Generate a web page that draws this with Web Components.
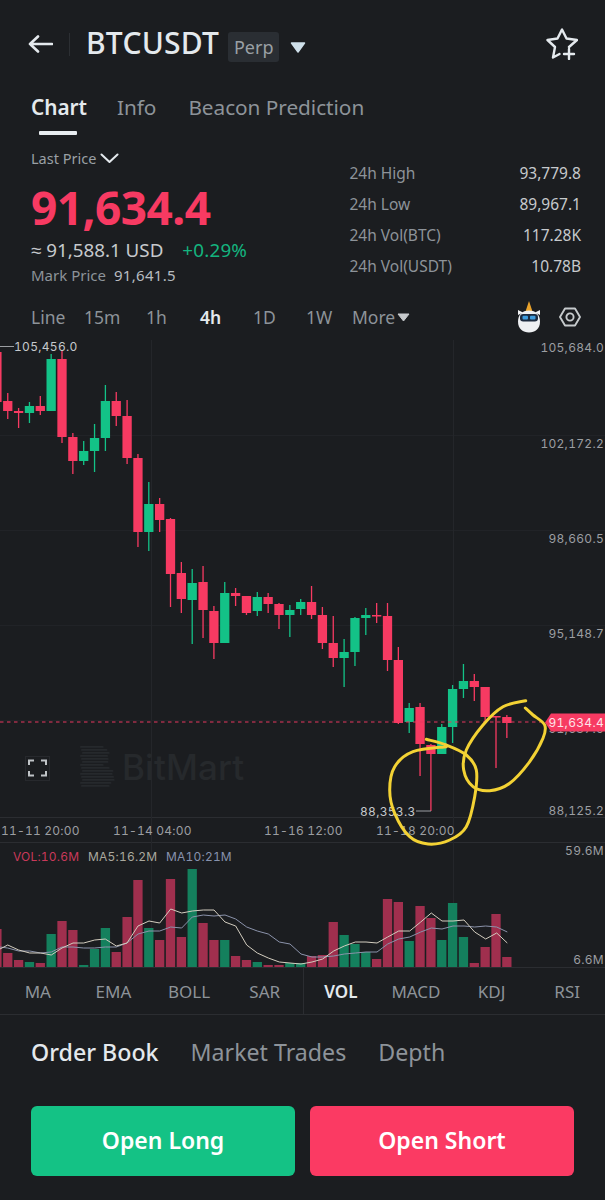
<!DOCTYPE html>
<html>
<head>
<meta charset="utf-8">
<title>BTCUSDT</title>
<style>
html,body{margin:0;padding:0;background:#1b1d20;color:#c6c9cc;font-family:"Noto Sans",sans-serif;}
body{width:605px;height:1200px;overflow:hidden;display:flex;flex-direction:column;}
</style>
</head>
<body>
<app-header></app-header>
<tab-strip></tab-strip>
<price-panel></price-panel>
<interval-bar></interval-bar>
<kline-chart></kline-chart>
<indicator-bar></indicator-bar>
<book-tabs></book-tabs>
<trade-actions></trade-actions>

<script>
class AppHeader extends HTMLElement {
    constructor(){
        super();
        this.attachShadow({mode:'open'});
        this.shadowRoot.innerHTML = `
<style>
:host{display:flex;align-items:center;height:88px;padding-left:28px;padding-right:27px;box-sizing:border-box;}
.sep{width:1px;height:23px;background:#2c2f33;margin:0 16px 0 16px;}
h1{margin:0 0 3px;font-size:30px;font-weight:500;color:#e4e9ed;letter-spacing:.25px;line-height:1;}
.perp{margin-left:9px;height:30px;width:51px;border-radius:3px;background:#2a2e33;color:#9aa0a5;font-size:18px;display:flex;align-items:center;justify-content:center;margin-top:6px;}
.caret{margin-left:11px;margin-top:6px;}
.star{margin-left:auto;}
svg{display:block;}
</style>
<svg width="25" height="18" viewBox="0 0 25 18" fill="none" stroke="#e4e9ed" stroke-width="2.6" stroke-linecap="round" stroke-linejoin="round"><path d="M24 9H2M10 1.5 2 9l8 7.5"/></svg>
<div class="sep"></div>
<h1>BTCUSDT</h1>
<div class="perp">Perp</div>
<svg class="caret" width="16" height="11" viewBox="0 0 16 11"><path d="M1.5 1h13L8 10z" fill="#cfe0ea" stroke="#cfe0ea" stroke-linejoin="round" stroke-width="1.5"/></svg>
<svg class="star" width="32" height="32" viewBox="545 27 32 32" fill="none" stroke="#e4e9ed" stroke-width="2.4" stroke-linecap="round" stroke-linejoin="round"><path d="M568 46 576 39 565.5 37.5 561 28.5 556.5 37.5 546.5 39 554 46 552 56.5 558.5 53"/><path d="M563 53h10M568 48v10"/></svg>`;
    }
}
customElements.define('app-header', AppHeader);

class TabStrip extends HTMLElement {
    constructor(){
        super();
        this.attachShadow({mode:'open'});
        this.shadowRoot.innerHTML = `
<style>
:host{display:flex;height:48px;padding-left:31px;box-sizing:border-box;font-size:20.8px;color:#8d9399;}
.tab{line-height:39px;position:relative;letter-spacing:-.05px;}
.on{color:#e4e9ed;font-weight:600;margin-right:30px;}
.on::after{content:"";position:absolute;left:8px;width:38px;top:43px;height:4px;background:#e8edf0;border-radius:1px;}
.info{margin-right:32px;}
</style>
<div class="tab on">Chart</div><div class="tab info">Info</div><div class="tab">Beacon Prediction</div>`;
    }
}
customElements.define('tab-strip', TabStrip);

class PricePanel extends HTMLElement {
    constructor(){
        super();
        this.attachShadow({mode:'open'});
        this.shadowRoot.innerHTML = `
<style>
:host{display:grid;grid-template-columns:318.5px 231.5px;height:164px;padding-left:31px;box-sizing:border-box;}
.last{display:flex;align-items:center;height:44px;font-size:14.5px;color:#9aa0a5;gap:4px;}
.big{font-size:46px;font-weight:700;color:#f73a62;line-height:54px;letter-spacing:-.55px;}
.usd{display:flex;line-height:32px;font-size:18.8px;color:#c6c9cc;gap:19px;}
.usd b{font-weight:400;color:#14b47f;letter-spacing:.2px;}
.mark{display:flex;line-height:18px;font-size:15px;color:#8d9399;gap:8px;}
.mark span{color:#b8bcc0;letter-spacing:.3px;}
.stats{padding-top:22px;}
.row{display:flex;justify-content:space-between;line-height:31px;font-size:15.5px;color:#8d9399;}
.row span{color:#c6c9cc;}
svg{display:block;}
</style>
<div>
  <div class="last">Last Price <svg width="19" height="10" viewBox="0 0 19 10" fill="none" stroke="#e4e9ed" stroke-width="2" stroke-linecap="round" stroke-linejoin="round"><path d="M1.5 1.5 9.5 9l8-7.5"/></svg></div>
  <div class="big">91,634.4</div>
  <div class="usd"><div>≈ 91,588.1 USD</div><b>+0.29%</b></div>
  <div class="mark">Mark Price <span>91,641.5</span></div>
</div>
<div class="stats">
  <div class="row">24h High<span>93,779.8</span></div>
  <div class="row">24h Low<span>89,967.1</span></div>
  <div class="row">24h Vol(BTC)<span>117.28K</span></div>
  <div class="row">24h Vol(USDT)<span>10.78B</span></div>
</div>`;
    }
}
customElements.define('price-panel', PricePanel);

class IntervalBar extends HTMLElement {
    constructor(){
        super();
        this.attachShadow({mode:'open'});
        this.shadowRoot.innerHTML = `
<style>
:host{display:flex;align-items:center;height:40px;padding:0 24px 6px 31px;box-sizing:border-box;font-size:17.5px;color:#8d9399;}
.i{width:53px;flex:none;}
.i.on{color:#e4e9ed;font-weight:600;}
.more{display:flex;align-items:center;gap:2px;}
.mascot{margin-left:auto;margin-right:18px;}
svg{display:block;}
</style>
<div class="i">Line</div><div class="i" style="width:62px">15m</div><div class="i" style="width:54px">1h</div><div class="i on">4h</div><div class="i">1D</div><div class="i" style="width:46px">1W</div>
<div class="more">More<svg width="13" height="9" viewBox="0 0 13 9"><path d="M1 1h11L6.500 8z" fill="#c6c9cc" stroke="#c6c9cc" stroke-linejoin="round"/></svg></div>
<svg class="mascot" width="24" height="32" viewBox="0 0 24 32">
  <path d="M8 12 12 0l4 12z" fill="#e9a22b"/>
  <path d="M1 14V9l5 2.500zM23 14V9l-5 2.500z" fill="#f2f3f4"/>
  <path d="M12 9.500c7 0 11 4.500 11 11 0 7.500-5 11-11 11S1 28 1 20.500c0-6.500 4-11 11-11z" fill="#eef0f2"/>
  <rect x="3" y="13" width="18" height="7.500" rx="3.200" fill="#1c2b3f"/>
  <rect x="5.500" y="14.800" width="5.500" height="3.600" rx="1" fill="#3d9bdc"/><rect x="13" y="14.800" width="5.500" height="3.600" rx="1" fill="#3d9bdc"/>
</svg>
<svg width="22" height="20" viewBox="0 0 22 20" fill="none" stroke="#c6cacc" stroke-width="1.900" stroke-linejoin="round"><path d="M6 1.500h10L21 10l-5 8.500H6L1 10z"/><circle cx="11" cy="10" r="3.600"/></svg>`;
    }
}
customElements.define('interval-bar', IntervalBar);

// candles: [up, bodyTop, bodyBottom, wickTop, wickBottom, volumeTop], y in page coordinates
const CANDLES = [
[0,352,402,345,402,929],[0,401,411,393,419,953],[0,411,413,408,428,960],[1,406,413,402,423,962],
[0,406,411,396,415,963],[1,359,411,354,411,934],[0,359,437,350,443,921],[0,437,461,433,474,930],
[1,451,461,441,465,965],[1,438,451,424,472,949],[1,401,438,385,451,928],[0,401,416,392,426,952],
[0,416,458,400,464,917],[0,458,532,454,547,880],[1,504,532,482,551,928],[0,504,520,498,532,940],
[0,519,574,518,607,879],[0,573,599,562,613,937],[1,583,600,569,644,869],[0,582,610,566,638,923],
[0,611,643,606,659,940],[1,593,643,582,643,940],[0,593,596,588,606,956],[0,596,613,596,615,960],
[1,597,611,592,616,962],[0,597,604,593,613,965],[0,604,615,603,629,965],[1,610,615,605,637,963],
[1,602,609,599,615,963],[0,602,615,586,619,956],[0,615,643,607,649,955],[0,643,658,616,667,922],
[1,652,658,639,687,935],[1,618,652,617,666,944],[1,615,618,608,635,952],[0,615,616,603,623,959],
[0,616,660,603,671,899],[0,660,723,647,724,902],[1,708,722,703,733,941],[0,707,744,703,776,906],
[0,745,754,744,811,918],[1,727,754,724,754,940],[1,689,727,685,743,903],[1,681,689,664,698,937],
[0,681,687,674,701,963],[0,687,717,687,723,947],[0,716,717,716,768,914],[0,717,723,715,738,957]
];
const cx = i => -3.1 + i*10.85;
const MA5 = [[0,949],[7.700,945],[18.700,950],[29.700,953],[40.700,953],[51.300,955],[62,948],[73,943],[83.700,943],[94.700,940],[105.300,939],[116.300,946],[127,943],[138,926],[149,921],[159.700,923],[170.700,909],[181.700,913],[192.300,911],[203.300,910],[214,910],[225,922],[235.700,926],[246.700,945],[257.300,953],[268.300,958],[279.300,962],[290,963],[301,964],[312,962],[322.700,959],[333.700,951],[344.300,946],[355.300,942],[366,942],[377,943],[387.700,937],[398.700,931],[409.700,931],[420.700,922],[431.300,913],[442,921],[453,921],[464,920],[474.700,932],[485.700,939],[496.700,933],[507.300,943]];
const MA10 = [[0,947],[7.700,948],[18.700,951],[29.700,951],[40.700,953],[51.300,952],[62,947],[73,947],[83.700,948],[94.700,948],[105.300,947],[116.300,947],[127,943],[138,934],[149,931],[159.700,931],[170.700,927],[181.700,928],[192.300,917],[203.300,915],[214,916],[225,915],[235.700,919],[246.700,927],[257.300,931],[268.300,934],[279.300,942],[290,944],[301,954],[312,957],[322.700,957],[333.700,956],[344.300,954],[355.300,953],[366,952],[377,952],[387.700,944],[398.700,939],[409.700,937],[420.700,932],[431.300,928],[442,929],[453,926],[464,926],[474.700,927],[485.700,926],[496.700,927],[507.300,932]];
// hand drawn circles, control points in page coordinates
const Z = (x,y) => [303+x/3, 570+y/3];
const SCRIBBLE_A = [[370,508],[430,525],[490,555],[520,600],[515,680],[490,770],[440,810],[375,822],[320,800],[275,730],[260,660],[275,590],[330,545],[430,530]].map(p=>Z(p[0],p[1]));
const SCRIBBLE_B = [[668,392],[600,410],[540,465],[490,540],[482,600],[510,650],[560,662],[620,640],[680,575],[720,505],[725,465],[690,435],[667,414]].map(p=>Z(p[0],p[1]));

function smooth(pts){
    let d = `M${pts[0][0].toFixed(1)} ${pts[0][1].toFixed(1)}`;
    for(let i=0;i<pts.length-1;i++){
        const p0=pts[i-1]||pts[i], p1=pts[i], p2=pts[i+1], p3=pts[i+2]||p2;
        const c1=[p1[0]+(p2[0]-p0[0])/6,p1[1]+(p2[1]-p0[1])/6];
        const c2=[p2[0]-(p3[0]-p1[0])/6,p2[1]-(p3[1]-p1[1])/6];
        d += `C${c1[0].toFixed(1)} ${c1[1].toFixed(1)} ${c2[0].toFixed(1)} ${c2[1].toFixed(1)} ${p2[0].toFixed(1)} ${p2[1].toFixed(1)}`;
    }
    return d;
}

class KlineChart extends HTMLElement {
    constructor(){
        super();
        this.attachShadow({mode:'open'});
        const RED='#f73a62', GREEN='#13c287', VR='#a02f4e', VG='#14805d';
        let grid='', cand='', vol='';
        [435,530,625,720,817,842,967].forEach(y=>{
            grid += `<rect x="0" y="${y}" width="605" height="1" fill="${y>=817?'#2b2d31':'#212327'}"/>`;
        });
        [151,453].forEach(x=>{ grid += `<rect x="${x}" y="340" width="1" height="627" fill="#24262a"/>`; });
        CANDLES.forEach((c,i)=>{
            const x=cx(i), col=c[0]?GREEN:RED;
            cand += `<rect x="${(x-.65).toFixed(2)}" y="${c[3]}" width="1.300" height="${c[4]-c[3]}" fill="${col}"/>`;
            cand += `<rect x="${(x-4.65).toFixed(2)}" y="${c[1]}" width="9.300" height="${Math.max(c[2]-c[1],1.500)}" fill="${col}"/>`;
            vol += `<rect x="${(x-4.65).toFixed(2)}" y="${c[5]}" width="9.300" height="${967-c[5]}" fill="${c[0]?VG:VR}"/>`;
        });
        const line = (pts,col) => `<polyline fill="none" stroke="${col}" stroke-width="1" stroke-linejoin="round" points="${pts.map(p=>p.join(',')).join(' ')}"/>`;
        // watermark logo: stacked stripes with two rounded lobes
        let mark='';
        for(let k=0;k<14;k++){
            const y=746+k*3, upper=k<7;
            const t=upper?(k-3)/3.5:(k-10)/3.5;
            const w=(upper?19:24)+9*Math.sqrt(Math.max(0,1-t*t));
            mark += `<rect x="${80+(k%3)}" y="${y}" width="${w.toFixed(1)}" height="1.800" rx=".9" fill="#26292c"/>`;
        }
        const ax = (t,y) => `<text x="604" y="${y}" text-anchor="end" class="ax">${t}</text>`;
        const dt = (t,x) => `<text x="${x}" y="835" class="ax dt">${t}</text>`;
        this.shadowRoot.innerHTML = `
<style>
:host{display:block;height:628px;flex:none;}
svg{display:block;overflow:visible;}
text{font-family:Inter,"Liberation Sans",sans-serif;font-variant-numeric:tabular-nums;}
.ax{font-size:12px;fill:#9b9ea2;letter-spacing:.3px;}
.dt{letter-spacing:.2px;}
.leg{font-size:12px;letter-spacing:.2px;}
.wm{font-size:35px;font-weight:500;fill:#26292c;letter-spacing:.1px;}
</style>
<svg width="605" height="628" viewBox="0 340 605 628">
  ${grid}
  ${mark}
  <text x="122" y="780" class="wm">BitMart</text>
  <rect x="25.500" y="756.500" width="24" height="24" fill="none" stroke="#27292d"/>
  <path d="M29 765v-4.500h5M41 760.500h5v4.500M29 771v4.500h5M41 775.500h5V771" fill="none" stroke="#c0c4c7" stroke-width="2"/>
  ${cand}
  <path d="M0 722H545" stroke="#e8395f" stroke-width="1.200" stroke-dasharray="3.500 3.500"/>
  ${ax('105,684.0',352)}${ax('102,172.2',448)}${ax('98,660.5',543)}${ax('95,148.7',638)}${ax('91,637.0',733)}${ax('88,125.2',815)}
  <path d="M0 346.500H14" stroke="#9b9ea2"/>
  <text x="14" y="350.500" class="ax" style="fill:#c6c9cc">105,456.0</text>
  <text x="360" y="815.500" class="ax" style="fill:#c6c9cc">88,353.3</text>
  <path d="M416 811H431" stroke="#9b9ea2"/>
  ${dt('11-11 20:00',1)}${dt('11-14 04:00',113)}${dt('11-16 12:00',264)}${dt('11-18 20:00',376)}
  ${ax('59.6M',855)}${ax('6.6M',964)}
  <text x="13" y="861" class="leg" fill="#c9395a">VOL:10.6M</text>
  <text x="88" y="861" class="leg" fill="#a9a89e">MA5:16.2M</text>
  <text x="166" y="861" class="leg" fill="#8792ad">MA10:21M</text>
  ${vol}
  ${line(MA10,'#8b93ab')}
  ${line(MA5,'#d3cdbf')}
  <path d="M545 722.500 551 713.500H605V731.500H551Z" fill="#f73a62"/>
  <text x="604" y="727" text-anchor="end" style="font-size:12px;letter-spacing:.3px" fill="#fde3e9">91,634.4</text>
  <path d="${smooth(SCRIBBLE_A)}" fill="none" stroke="#f3d234" stroke-width="3" stroke-linecap="round"/>
  <path d="${smooth(SCRIBBLE_B)}" fill="none" stroke="#f3d234" stroke-width="3" stroke-linecap="round"/>
</svg>`;
    }
}
customElements.define('kline-chart', KlineChart);

class IndicatorBar extends HTMLElement {
    constructor(){
        super();
        this.attachShadow({mode:'open'});
        this.shadowRoot.innerHTML = `
<style>
:host{display:grid;grid-template-columns:repeat(8,1fr);height:47px;box-sizing:border-box;border-bottom:1px solid #2b2d31;font-size:17px;color:#8d9399;}
div{display:flex;align-items:center;justify-content:center;}
.on{color:#e4e9ed;font-weight:600;}
.split{border-left:1px solid #2b2d31;}
</style>
<div>MA</div><div>EMA</div><div>BOLL</div><div>SAR</div><div class="on split">VOL</div><div>MACD</div><div>KDJ</div><div>RSI</div>`;
    }
}
customElements.define('indicator-bar', IndicatorBar);

class BookTabs extends HTMLElement {
    constructor(){
        super();
        this.attachShadow({mode:'open'});
        this.shadowRoot.innerHTML = `
<style>
:host{display:flex;align-items:center;gap:32px;height:77px;padding:0 0 4px 31px;box-sizing:border-box;font-size:23.200px;color:#8d9399;}
.on{color:#e4e9ed;font-weight:500;}
</style>
<div class="on">Order Book</div><div>Market Trades</div><div>Depth</div>`;
    }
}
customElements.define('book-tabs', BookTabs);

class TradeActions extends HTMLElement {
    constructor(){
        super();
        this.attachShadow({mode:'open'});
        this.shadowRoot.innerHTML = `
<style>
:host{display:flex;gap:15px;padding:14px 31px 0;box-sizing:border-box;}
button{flex:1;height:70px;border:0;border-radius:6px;color:#fff;font:600 23px "Noto Sans",sans-serif;padding:0 0 2px;}
.long{background:#14c285;}
.short{background:#fb3a63;}
</style>
<button class="long">Open Long</button><button class="short">Open Short</button>`;
    }
}
customElements.define('trade-actions', TradeActions);
</script>
</body>
</html>
